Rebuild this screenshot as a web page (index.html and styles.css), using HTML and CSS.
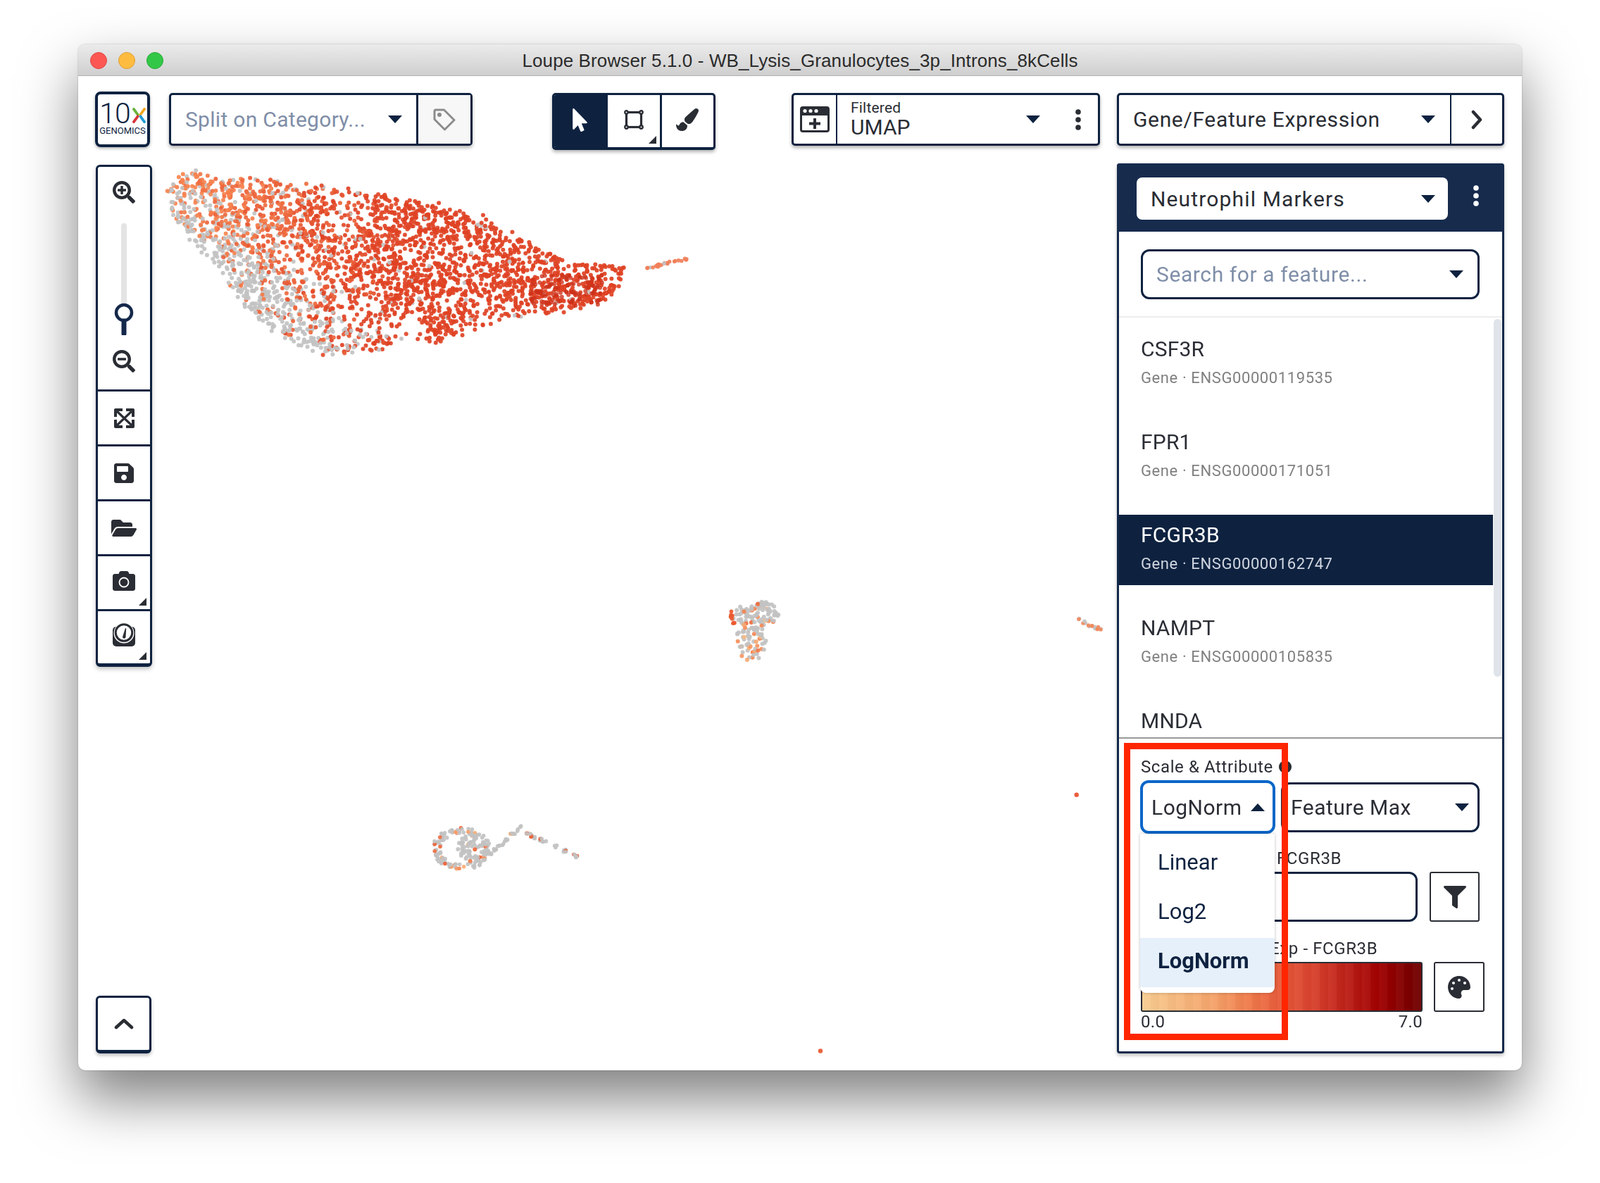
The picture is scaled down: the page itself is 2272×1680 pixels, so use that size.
FILE: index.html
```html
<!DOCTYPE html>
<html lang="en">

<head>
    <meta charset="UTF-8">
    <title>Loupe Browser 5.1.0</title>
    <link rel="stylesheet" href="styles.css">
    <script src="scatter.js" defer></script>
</head>

<body>
    <div class="window">
        <div class="titleBar">
            <div class="lights">
                <span class="light redLight"></span>
                <span class="light amberLight"></span>
                <span class="light greenLight"></span>
            </div>
            <span class="windowTitle">Loupe Browser 5.1.0 - WB_Lysis_Granulocytes_3p_Introns_8kCells</span>
        </div>

        <div class="topBar">
            <div class="logo">
                <div class="logoTop">
                    <span class="logoTen">10</span>
                    <svg class="logoX" viewBox="0 0 20 22">
                        <path d="M1 0l8 11" stroke="#6ab23c" stroke-width="4" />
                        <path d="M19 0l-8 11" stroke="#f2a81d" stroke-width="4" />
                        <path d="M9 11l-8 11" stroke="#d8343a" stroke-width="4" />
                        <path d="M11 11l8 11" stroke="#1f9ad6" stroke-width="4" />
                    </svg>
                </div>
                <span class="logoWord">GENOMICS</span>
            </div>

            <div class="box splitBox">
                <div class="splitMain">
                    <span class="placeholder">Split on Category...</span>
                    <span class="caret"></span>
                </div>
                <div class="tagCell">
                    <svg class="tagIcon" viewBox="0 0 32 32" fill="none" stroke="#8c8c8c" stroke-width="3">
                        <path d="M2 4a2 2 0 0 1 2-2h11.500L30 16.500 16.500 30 2 15.500z" stroke-linejoin="round" />
                        <circle cx="9" cy="9" r="3" fill="#8c8c8c" stroke="none" />
                    </svg>
                </div>
            </div>

            <div class="box tools">
                <div class="tool toolActive">
                    <svg class="pointerIcon" viewBox="0 0 320 512">
                        <path fill="#fff" d="M302.189 329.126H196.105l55.831 135.993c3.889 9.428-.555 19.999-9.444 23.999l-49.165 21.427c-9.165 4-19.443-.571-23.332-9.714l-53.053-129.136-86.664 89.138C18.729 472.71 0 463.554 0 447.977V18.299C0 1.899 19.921-6.096 30.277 5.443l284.412 292.542c11.472 11.179 3.007 31.141-12.5 31.141z" />
                    </svg>
                </div>
                <div class="tool">
                    <svg class="cropIcon" viewBox="0 0 28 28" fill="none" stroke="#2a2d34" stroke-width="3.200">
                        <rect x="3.500" y="3.500" width="21" height="21" />
                        <circle cx="3.500" cy="3.500" r="2.200" fill="#fff" stroke-width="2.400" />
                        <circle cx="24.500" cy="3.500" r="2.200" fill="#fff" stroke-width="2.400" />
                        <circle cx="3.500" cy="24.500" r="2.200" fill="#fff" stroke-width="2.400" />
                        <circle cx="24.500" cy="24.500" r="2.200" fill="#fff" stroke-width="2.400" />
                    </svg>
                    <span class="cornerMark"></span>
                </div>
                <div class="tool">
                    <svg class="brushIcon" viewBox="0 0 512 512">
                        <path fill="#2a2d34" d="M167.02 309.34c-40.12 2.58-76.53 17.86-97.19 72.3-2.35 6.21-8 9.98-14.59 9.98-11.11 0-45.46-27.67-55.25-34.35C0 439.62 37.93 512 128 512c75.86 0 128-43.77 128-120.19 0-3.11-.65-6.08-.97-9.13l-88.01-73.34zM457.89 0c-15.16 0-29.37 6.71-40.21 16.45C213.27 199.05 192 203.34 192 257.09c0 13.7 3.25 26.76 8.73 38.7l63.82 53.18c7.21 1.8 14.64 3.03 22.39 3.03 62.11 0 98.11-45.47 211.16-256.46 7.38-14.35 13.9-29.85 13.9-45.99C512 20.64 486 0 457.89 0z" />
                    </svg>
                </div>
            </div>

            <div class="box viewBox">
                <div class="viewIconCell">
                    <svg class="windowIcon" viewBox="0 0 42 37">
                        <path fill="#2a2d34" fill-rule="evenodd" d="M4 0h34a4 4 0 0 1 4 4v29a4 4 0 0 1-4 4H4a4 4 0 0 1-4-4V4a4 4 0 0 1 4-4zM3 13v20a1 1 0 0 0 1 1h34a1 1 0 0 0 1-1V13z" />
                        <circle cx="7" cy="6.500" r="2.600" fill="#fff" />
                        <circle cx="15" cy="6.500" r="2.600" fill="#fff" />
                        <circle cx="23" cy="6.500" r="2.600" fill="#fff" />
                        <path fill="#2a2d34" d="M19 17h4v5.500h6v4h-6V32h-4v-5.500h-6v-4h6z" />
                    </svg>
                </div>
                <div class="viewText">
                    <span class="viewSmall">Filtered</span>
                    <span class="viewName">UMAP</span>
                </div>
                <span class="caret"></span>
                <svg class="dotsIcon" viewBox="0 0 8 30">
                    <circle cx="4" cy="4" r="3.800" fill="#2a2d34" />
                    <circle cx="4" cy="15" r="3.800" fill="#2a2d34" />
                    <circle cx="4" cy="26" r="3.800" fill="#2a2d34" />
                </svg>
            </div>

            <div class="box geneBox">
                <div class="geneMain">
                    <span class="bodyText geneText">Gene/Feature Expression</span>
                    <span class="caret"></span>
                </div>
                <div class="chevronCell">
                    <svg class="chevronRight" viewBox="0 0 16 28" fill="none" stroke="#2a2d34" stroke-width="4.500" stroke-linecap="round" stroke-linejoin="round">
                        <path d="M3 3l10 11L3 25" />
                    </svg>
                </div>
            </div>
        </div>

        <div class="mainRow">
            <div class="leftColumn">
                <div class="sideBar">
                    <div class="zoomCell">
                        <svg class="zoomIcon" viewBox="0 0 512 512">
                            <path fill="#2a2d34" d="M304 192v32c0 6.600-5.400 12-12 12h-56v56c0 6.600-5.400 12-12 12h-32c-6.600 0-12-5.400-12-12v-56h-56c-6.600 0-12-5.400-12-12v-32c0-6.600 5.400-12 12-12h56v-56c0-6.600 5.400-12 12-12h32c6.600 0 12 5.400 12 12v56h56c6.600 0 12 5.400 12 12zm201 284.700L476.700 505c-9.400 9.400-24.600 9.400-33.900 0L343 405.300c-4.500-4.500-7-10.600-7-17V372c-35.300 27.600-79.700 44-128 44C93.100 416 0 322.900 0 208S93.100 0 208 0s208 93.100 208 208c0 48.300-16.400 92.700-44 128h16.300c6.400 0 12.500 2.500 17 7l99.700 99.700c9.300 9.400 9.300 24.600 0 34zM344 208c0-75.200-60.800-136-136-136S72 132.800 72 208s60.800 136 136 136 136-60.800 136-136z" />
                        </svg>
                        <div class="zoomTrack"></div>
                        <svg class="zoomKnob" viewBox="0 0 28 46">
                            <circle cx="14" cy="14" r="11" fill="#fff" stroke="#14284a" stroke-width="4.500" />
                            <path d="M14 26v18" stroke="#14284a" stroke-width="7" stroke-linecap="round" />
                        </svg>
                        <svg class="zoomIcon zoomOut" viewBox="0 0 512 512">
                            <path fill="#2a2d34" d="M304 192v32c0 6.600-5.400 12-12 12H124c-6.600 0-12-5.400-12-12v-32c0-6.600 5.400-12 12-12h168c6.600 0 12 5.400 12 12zm201 284.700L476.700 505c-9.400 9.400-24.600 9.400-33.900 0L343 405.300c-4.500-4.500-7-10.600-7-17V372c-35.300 27.600-79.700 44-128 44C93.100 416 0 322.900 0 208S93.100 0 208 0s208 93.100 208 208c0 48.300-16.400 92.700-44 128h16.300c6.400 0 12.500 2.500 17 7l99.700 99.700c9.300 9.400 9.300 24.600 0 34zM344 208c0-75.200-60.800-136-136-136S72 132.800 72 208s60.800 136 136 136 136-60.800 136-136z" />
                        </svg>
                    </div>
                    <div class="sideCell">
                        <svg class="expandIcon" viewBox="0 0 29 28" fill="none" stroke="#2a2d34">
                            <path d="M4 4l21 20M25 4L4 24" stroke-width="3.200" />
                            <path d="M2 12V2h10M17 2h10v10M27 16v10H17M12 26H2V16" stroke-width="4" stroke-linejoin="round" />
                        </svg>
                    </div>
                    <div class="sideCell">
                        <svg class="sideIcon" viewBox="0 0 448 512">
                            <path fill="#2a2d34" d="M433.941 129.941l-83.882-83.882A48 48 0 0 0 316.118 32H48C21.490 32 0 53.490 0 80v352c0 26.510 21.490 48 48 48h352c26.510 0 48-21.490 48-48V163.882a48 48 0 0 0-14.059-33.941zM224 416c-35.346 0-64-28.654-64-64 0-35.346 28.654-64 64-64s64 28.654 64 64c0 35.346-28.654 64-64 64zm96-304.520V212c0 6.627-5.373 12-12 12H76c-6.627 0-12-5.373-12-12V108c0-6.627 5.373-12 12-12h228.520c3.183 0 6.235 1.264 8.485 3.515l3.480 3.480A11.996 11.996 0 0 1 320 111.480z" />
                        </svg>
                    </div>
                    <div class="sideCell">
                        <svg class="sideIcon wideIcon" viewBox="0 0 576 512">
                            <path fill="#2a2d34" d="M572.694 292.093L500.270 416.248A63.997 63.997 0 0 1 444.989 448H45.025c-18.523 0-30.064-20.093-20.731-36.093l72.424-124.155A64 64 0 0 1 152 256h399.964c18.523 0 30.064 20.093 20.730 36.093zM152 224h328v-48c0-26.510-21.490-48-48-48H272l-64-64H48C21.490 64 0 85.490 0 112v278.046l69.077-118.418C86.214 242.250 117.989 224 152 224z" />
                        </svg>
                    </div>
                    <div class="sideCell">
                        <svg class="sideIcon cameraIcon" viewBox="0 0 512 512">
                            <path fill="#2a2d34" d="M512 144v288c0 26.500-21.500 48-48 48H48c-26.500 0-48-21.500-48-48V144c0-26.500 21.500-48 48-48h88l12.300-32.900c7-18.700 24.900-31.100 44.900-31.100h125.500c20 0 37.900 12.400 44.900 31.100L376 96h88c26.500 0 48 21.500 48 48z" />
                            <circle cx="256" cy="288" r="104" fill="#2a2d34" stroke="#fff" stroke-width="30" />
                        </svg>
                        <span class="cornerMark"></span>
                    </div>
                    <div class="sideCell lastCell">
                        <svg class="gaugeIcon" viewBox="0 0 32 33">
                            <rect x="0" y="5" width="32" height="28" rx="5" fill="#2a2d34" />
                            <circle cx="16" cy="14" r="14.500" fill="#fff" />
                            <circle cx="16" cy="13.500" r="11.800" fill="#fff" stroke="#2a2d34" stroke-width="3" />
                            <path d="M14 19.500L18 7l1.200.4-.7 12.600a2.300 2.300 0 0 1-4.500-.5z" fill="#2a2d34" />
                        </svg>
                        <span class="cornerMark"></span>
                    </div>
                </div>

                <div class="upButton">
                    <svg class="chevronUp" viewBox="0 0 28 16" fill="none" stroke="#2a2d34" stroke-width="4.500" stroke-linecap="round" stroke-linejoin="round">
                        <path d="M3 13L14 3l11 10" />
                    </svg>
                </div>
            </div>

            <div class="plot">
                <canvas id="scatter" width="1370" height="1264"></canvas>
            </div>

            <div class="panel">
                <div class="panelHead">
                    <div class="listSelect">
                        <span class="bodyText listText">Neutrophil Markers</span>
                        <span class="caret"></span>
                    </div>
                    <svg class="dotsIcon" viewBox="0 0 8 30">
                        <circle cx="4" cy="4" r="3.800" fill="#fff" />
                        <circle cx="4" cy="15" r="3.800" fill="#fff" />
                        <circle cx="4" cy="26" r="3.800" fill="#fff" />
                    </svg>
                </div>

                <div class="searchWrap">
                    <div class="searchBox">
                        <span class="placeholder searchText">Search for a feature...</span>
                        <span class="caret"></span>
                    </div>
                </div>

                <div class="featureList">
                    <div class="rows">
                        <div class="featureRow">
                            <span class="featureName">CSF3R</span>
                            <span class="featureId">Gene · ENSG00000119535</span>
                        </div>
                        <div class="featureRow">
                            <span class="featureName">FPR1</span>
                            <span class="featureId">Gene · ENSG00000171051</span>
                        </div>
                        <div class="featureRow selectedRow">
                            <span class="featureName">FCGR3B</span>
                            <span class="featureId">Gene · ENSG00000162747</span>
                        </div>
                        <div class="featureRow">
                            <span class="featureName">NAMPT</span>
                            <span class="featureId">Gene · ENSG00000105835</span>
                        </div>
                        <div class="featureRow">
                            <span class="featureName">MNDA</span>
                        </div>
                    </div>
                    <div class="scrollBar">
                        <div class="scrollThumb"></div>
                    </div>
                </div>

                <div class="scalePanel">
                    <div class="smallLabel scaleLabel">
                        <span>Scale &amp; Attribute</span>
                        <span class="infoDot"></span>
                    </div>
                    <div class="scaleRow">
                        <div class="scaleSelect openSelect">
                            <span class="bodyText">LogNorm</span>
                            <span class="caret caretUp"></span>
                        </div>
                        <div class="scaleSelect attrSelect">
                            <span class="bodyText">Feature Max</span>
                            <span class="caret"></span>
                        </div>
                    </div>

                    <div class="smallLabel filterLabel">FCGR3B</div>
                    <div class="filterRow">
                        <div class="filterInput"></div>
                        <div class="squareButton">
                            <svg class="filterIcon" viewBox="0 0 512 512">
                                <path fill="#2a2d34" d="M487.976 0H24.028C2.710 0-8.047 25.866 7.058 40.971L192 225.941V432c0 7.831 3.821 15.170 10.237 19.662l80 55.980C298.020 518.690 320 507.493 320 487.980V225.941l184.947-184.970C520.021 25.896 509.338 0 487.976 0z" />
                            </svg>
                        </div>
                    </div>

                    <div class="smallLabel rampLabel">Exp - FCGR3B</div>
                    <div class="rampRow">
                        <div class="ramp"></div>
                        <div class="squareButton">
                            <svg class="paletteIcon" viewBox="0 0 512 512">
                                <path fill="#2a2d34" d="M204.300 5C104.900 24.400 24.800 104.300 5.200 203.400c-37 187 131.700 326.400 258.800 306.700 41.200-6.400 61.400-54.600 42.500-91.700-23.100-45.400 9.900-98.400 60.900-98.400h79.700c35.800 0 64.800-29.600 64.900-65.300C511.500 97.100 368.100-26.900 204.300 5zM96 320c-17.700 0-32-14.300-32-32s14.300-32 32-32 32 14.300 32 32-14.300 32-32 32zm32-128c-17.700 0-32-14.300-32-32s14.300-32 32-32 32 14.300 32 32-14.300 32-32 32zm128-64c-17.700 0-32-14.300-32-32s14.300-32 32-32 32 14.300 32 32-14.300 32-32 32zm128 64c-17.700 0-32-14.300-32-32s14.300-32 32-32 32 14.300 32 32-14.300 32-32 32z" />
                            </svg>
                        </div>
                    </div>
                    <div class="rampTicks">
                        <span>0.0</span>
                        <span>7.0</span>
                    </div>

                    <div class="scaleMenu">
                        <div class="menuItem">Linear</div>
                        <div class="menuItem">Log2</div>
                        <div class="menuItem menuActive">LogNorm</div>
                    </div>
                    <div class="redMark"></div>
                </div>
            </div>
        </div>
    </div>
</body>

</html>
```

FILE: styles.css
```css
html {
    margin: 0;
    height: 100%;
}

body {
    margin: 0;
    height: 1680px;
    overflow: hidden;
    background-color: #ffffff;
    font-family: "Roboto", "Liberation Sans", sans-serif;
    color: #2a2d34;
}

.window {
    width: 2050px;
    height: 1457px;
    margin: 63px 0 0 111px;
    background-color: #ffffff;
    border-radius: 10px;
    box-shadow: rgba(0, 0, 0, 0.5) 0px 40px 80px, rgba(0, 0, 0, 0.3) 0px 0px 2px;
    display: flex;
    flex-direction: column;
    overflow: hidden;
}

.titleBar {
    height: 45px;
    flex: none;
    display: flex;
    align-items: center;
    justify-content: center;
    position: relative;
    padding-top: 2px;
    background-image: linear-gradient(#ebebeb, #cfcfcf);
    border-bottom: solid 1px #b1b1b1;
    box-sizing: border-box;
}

.lights {
    position: absolute;
    left: 17px;
    top: 11px;
    display: flex;
    gap: 16px;
}

.light {
    width: 24px;
    height: 24px;
    border-radius: 50%;
    box-sizing: border-box;
}

.redLight {
    background-color: #fc5753;
    border: solid 1px #df4744;
}

.amberLight {
    background-color: #fdbc40;
    border: solid 1px #de9f34;
}

.greenLight {
    background-color: #33c748;
    border: solid 1px #27aa35;
}

.windowTitle {
    font-family: "Liberation Sans", sans-serif;
    font-size: 26px;
    letter-spacing: 0.11px;
    color: #2b2b2b;
}

.topBar {
    flex: none;
    height: 124px;
    box-sizing: border-box;
    padding: 22px 0 0 24px;
    display: flex;
    align-items: flex-start;
}

.box {
    box-sizing: border-box;
    border: solid 3px #0e2240;
    border-radius: 5px;
    background-color: #ffffff;
    box-shadow: rgba(0, 0, 0, 0.3) 0px 3px 5px;
    display: flex;
}

.logo {
    width: 78px;
    height: 79px;
    box-sizing: border-box;
    border: solid 4px #0e2240;
    border-radius: 8px;
    box-shadow: rgba(0, 0, 0, 0.3) 0px 2px 4px;
    display: flex;
    flex-direction: column;
    align-items: center;
    padding-top: 11px;
}

.logoTop {
    display: flex;
    align-items: flex-end;
    gap: 3px;
    height: 32px;
}

.logoTen {
    font-size: 41px;
    font-weight: 300;
    line-height: 32px;
    color: #0e2240;
    letter-spacing: -1px;
}

.logoX {
    width: 19px;
    height: 22px;
    margin-bottom: 2px;
}

.logoWord {
    font-size: 13px;
    line-height: 15px;
    margin-top: 1px;
    color: #0e2240;
}

.splitBox {
    width: 431px;
    height: 75px;
    margin: 2px 0 0 27px;
}

.splitMain {
    flex: 1;
    display: flex;
    align-items: center;
    justify-content: space-between;
    padding: 0 20px 0 20px;
    border-right: solid 3px #0e2240;
}

.tagCell {
    width: 74px;
    background-color: #f7f7f7;
    display: flex;
    align-items: center;
    justify-content: center;
}

.tagIcon {
    width: 32px;
    height: 32px;
}

.placeholder {
    font-size: 30px;
    color: #7f8ea8;
    letter-spacing: 0.3px;
}

.searchText {
    letter-spacing: 0.6px;
}

.bodyText {
    font-size: 30px;
    color: #2a2d34;
    letter-spacing: 0.5px;
}

.geneText {
    letter-spacing: 0.65px;
}

.listText {
    letter-spacing: 1.15px;
}

.caret {
    flex: none;
    width: 0;
    height: 0;
    border-left: solid 10px transparent;
    border-right: solid 10px transparent;
    border-top: solid 11px #0e2240;
}

.caretUp {
    border-top: none;
    border-bottom: solid 11px #0e2240;
}

.tools {
    width: 232px;
    height: 81px;
    margin: 2px 0 0 113px;
    overflow: hidden;
    border-bottom-width: 4px;
}

.tool {
    flex: 1;
    display: flex;
    align-items: center;
    justify-content: center;
    position: relative;
    padding-bottom: 4px;
    border-left: solid 3px #0e2240;
}

.tool:first-child {
    border-left: none;
}

.toolActive {
    background-color: #0e2240;
}

.pointerIcon {
    width: 21px;
    height: 33px;
}

.cropIcon {
    width: 28px;
    height: 28px;
}

.brushIcon {
    width: 32px;
    height: 32px;
}

.cornerMark {
    position: absolute;
    right: 5px;
    bottom: 5px;
    width: 0;
    height: 0;
    border-left: solid 11px transparent;
    border-bottom: solid 11px #2a2d34;
}

.viewBox {
    width: 438px;
    height: 75px;
    margin: 2px 0 0 108px;
    align-items: center;
}

.viewIconCell {
    width: 60px;
    height: 100%;
    border-right: solid 2px #0e2240;
    display: flex;
    align-items: center;
    justify-content: center;
    flex: none;
}

.windowIcon {
    width: 42px;
    height: 37px;
}

.viewText {
    flex: 1;
    display: flex;
    flex-direction: column;
    padding-left: 19px;
}

.viewSmall {
    font-size: 21px;
    line-height: 22px;
    letter-spacing: 0.2px;
    margin-top: -1px;
}

.viewName {
    font-size: 30px;
    line-height: 33px;
}

.viewBox .caret {
    margin-right: 50px;
}

.dotsIcon {
    width: 8px;
    height: 30px;
    flex: none;
}

.viewBox .dotsIcon {
    margin-right: 24px;
}

.geneBox {
    width: 550px;
    height: 75px;
    margin: 2px 0 0 24px;
}

.geneMain {
    flex: 1;
    display: flex;
    align-items: center;
    justify-content: space-between;
    padding: 0 21px 0 20px;
    border-right: solid 2px #0e2240;
}

.chevronCell {
    width: 72px;
    display: flex;
    align-items: center;
    justify-content: center;
}

.chevronRight {
    width: 16px;
    height: 28px;
}

.mainRow {
    flex: 1;
    min-height: 0;
    display: flex;
    padding-left: 25px;
    align-items: flex-start;
}

.leftColumn {
    width: 80px;
    height: 1262px;
    flex: none;
    margin-top: 2px;
    display: flex;
    flex-direction: column;
    justify-content: space-between;
    position: relative;
    z-index: 1;
}

.sideBar {
    width: 80px;
    box-sizing: border-box;
    border: solid 3px #0e2240;
    border-bottom-width: 5px;
    border-radius: 6px;
    background-color: #ffffff;
    box-shadow: rgba(0, 0, 0, 0.25) 0px 3px 6px;
}

.zoomCell {
    height: 316px;
    display: flex;
    flex-direction: column;
    align-items: center;
    position: relative;
}

.zoomIcon {
    width: 32px;
    height: 32px;
    margin-top: 20px;
}

.zoomOut {
    position: absolute;
    top: 260px;
    left: 21px;
    margin: 0;
}

.zoomTrack {
    width: 8px;
    height: 130px;
    margin-top: 28px;
    border-radius: 4px;
    background-color: #e4e4e4;
}

.zoomKnob {
    position: absolute;
    left: 23px;
    top: 193px;
    width: 28px;
    height: 46px;
}

.sideCell {
    height: 78px;
    box-sizing: border-box;
    border-top: solid 3px #0e2240;
    display: flex;
    align-items: center;
    justify-content: center;
    position: relative;
}

.lastCell {
    height: 77px;
}

.sideIcon {
    width: 28px;
    height: 32px;
}

.expandIcon {
    width: 29px;
    height: 28px;
}

.wideIcon {
    width: 36px;
}

.cameraIcon {
    width: 32px;
    height: 34px;
    margin-bottom: 6px;
}

.gaugeIcon {
    width: 32px;
    height: 33px;
    margin-bottom: 8px;
}

.upButton {
    width: 79px;
    height: 82px;
    box-sizing: border-box;
    border: solid 3px #0e2240;
    border-bottom-width: 5px;
    border-radius: 6px;
    box-shadow: rgba(0, 0, 0, 0.25) 0px 3px 5px;
    display: flex;
    align-items: center;
    justify-content: center;
    background-color: #ffffff;
}

.chevronUp {
    width: 28px;
    height: 16px;
}

.plot {
    width: 1370px;
    flex: none;
    height: 1264px;
}

#scatter {
    display: block;
}

.panel {
    width: 550px;
    height: 1264px;
    flex: none;
    box-sizing: border-box;
    border: solid 3px #14284a;
    border-top: none;
    border-radius: 4px;
    box-shadow: rgba(0, 0, 0, 0.25) 0px 3px 5px;
    display: flex;
    flex-direction: column;
    background-color: #ffffff;
}

.panelHead {
    height: 97px;
    flex: none;
    box-sizing: border-box;
    margin: 0 -3px;
    padding: 20px 36px 0 28px;
    background-color: #172b4d;
    border-radius: 4px 4px 0 0;
    display: flex;
    align-items: flex-start;
    justify-content: space-between;
}

.listSelect {
    width: 442px;
    height: 60px;
    box-sizing: border-box;
    padding: 0 18px 0 20px;
    border-radius: 8px;
    background-color: #ffffff;
    display: flex;
    align-items: center;
    justify-content: space-between;
}

.panelHead .dotsIcon {
    margin-top: 11px;
}

.searchWrap {
    height: 122px;
    flex: none;
    box-sizing: border-box;
    padding: 25px 32px 0 31px;
    border-bottom: solid 2px #eeeeee;
}

.searchBox {
    height: 71px;
    box-sizing: border-box;
    border: solid 3px #0e2240;
    border-radius: 12px;
    padding: 0 20px 0 19px;
    display: flex;
    align-items: center;
    justify-content: space-between;
}

.featureList {
    flex: 1;
    min-height: 0;
    display: flex;
    overflow: hidden;
}

.rows {
    flex: 1;
    padding-top: 16px;
    display: flex;
    flex-direction: column;
    gap: 32px;
}

.featureRow {
    height: 100px;
    flex: none;
    box-sizing: border-box;
    padding: 12px 0 0 31px;
    display: flex;
    flex-direction: column;
}

.featureName {
    font-size: 30px;
    line-height: 34px;
    letter-spacing: 0.2px;
}

.featureId {
    font-size: 22px;
    line-height: 26px;
    margin-top: 11px;
    color: #808080;
    letter-spacing: 0.6px;
}

.selectedRow {
    background-color: #0e2240;
}

.selectedRow .featureName {
    color: #ffffff;
}

.selectedRow .featureId {
    color: #d0d6e0;
}

.scrollBar {
    width: 13px;
    flex: none;
}

.scrollThumb {
    width: 11px;
    height: 508px;
    border-radius: 6px;
    margin: 2px 0 0 1px;
    background-color: #dfe3ea;
}

.scalePanel {
    height: 446px;
    flex: none;
    box-sizing: border-box;
    border-top: solid 2px #999999;
    padding-left: 31px;
    position: relative;
}

.smallLabel {
    font-size: 24px;
    line-height: 28px;
    letter-spacing: 0.6px;
    color: #2a2d34;
}

.scaleLabel {
    margin-top: 26px;
    display: flex;
    align-items: center;
    gap: 8px;
}

.infoDot {
    width: 18px;
    height: 18px;
    border-radius: 50%;
    background-color: #2a2d34;
}

.scaleRow {
    margin-top: 5px;
    height: 76px;
    display: flex;
    align-items: center;
    gap: 8px;
    margin-left: -1px;
}

.scaleSelect {
    box-sizing: border-box;
    height: 71px;
    border: solid 3px #0e2240;
    border-radius: 12px;
    display: flex;
    align-items: center;
    justify-content: space-between;
}

.openSelect {
    width: 192px;
    height: 76px;
    border: solid 4px #0a66c8;
    padding: 0 11px 0 12px;
}

.attrSelect {
    width: 282px;
    padding: 0 12px 0 11px;
}

.filterLabel {
    margin-top: 21px;
    padding-left: 193px;
}

.filterRow,
.rampRow {
    display: flex;
    align-items: flex-start;
}

.filterRow {
    margin-top: 5px;
}

.filterInput {
    width: 393px;
    height: 71px;
    box-sizing: border-box;
    border: solid 3px #0e2240;
    border-radius: 12px;
}

.squareButton {
    width: 71px;
    height: 71px;
    box-sizing: border-box;
    border: solid 2px #2a2d34;
    border-radius: 3px;
    display: flex;
    align-items: center;
    justify-content: center;
    background-color: #ffffff;
}

.filterRow .squareButton {
    margin-left: 17px;
}

.filterIcon {
    width: 32px;
    height: 32px;
}

.rampLabel {
    margin-top: 24px;
    padding-left: 183px;
}

.rampRow {
    margin-top: 5px;
}

.ramp {
    width: 400px;
    height: 71px;
    box-sizing: border-box;
    border: solid 2px #2a2d34;
    border-radius: 3px;
    background-image: repeating-linear-gradient(to right, rgba(255, 255, 255, 0.035) 0 12px, rgba(0, 0, 0, 0.02) 12px 24px), linear-gradient(to right, #f8cd92 0%, #f5a56c 25%, #f07c4c 38%, #e75a3a 50%, #d6402c 62%, #b61812 76%, #a00000 85%, #6e0000 100%);
}

.rampRow .squareButton {
    margin-left: 16px;
    width: 72px;
}

.paletteIcon {
    width: 32px;
    height: 32px;
}

.rampTicks {
    width: 400px;
    display: flex;
    justify-content: space-between;
    font-size: 24px;
    line-height: 28px;
    letter-spacing: 0.3px;
}

.scaleMenu {
    position: absolute;
    left: 30px;
    top: 135px;
    width: 191px;
    height: 226px;
    background-color: #ffffff;
    border-radius: 0 0 8px 8px;
    box-shadow: rgba(0, 0, 0, 0.25) 0px 0px 4px;
    padding-top: 8px;
    box-sizing: border-box;
    z-index: 2;
}

.menuItem {
    height: 70px;
    box-sizing: border-box;
    padding: 0 0 6px 25px;
    display: flex;
    align-items: center;
    font-size: 31px;
    color: #0e2240;
}

.menuActive {
    background-color: #e6f0fa;
    font-weight: 700;
}

.redMark {
    position: absolute;
    left: 7px;
    top: 6px;
    width: 233px;
    height: 422px;
    box-sizing: border-box;
    border: solid 9px #ff2600;
    z-index: 3;
}
```

FILE: scatter.js
```js
// draws the UMAP dots, coordinates below are page px / 1.449
const canvas = document.getElementById("scatter");
const ctx = canvas.getContext("2d");
const SCALE = 1.449;
const ORIGIN_X = 216;
const ORIGIN_Y = 232;
const GREY = "#c2c2c2";

let seed = 20210;
function rand() {
    seed = (seed + 0x6d2b79f5) | 0;
    let t = Math.imul(seed ^ (seed >>> 15), 1 | seed);
    t = (t + Math.imul(t ^ (t >>> 7), 61 | t)) ^ t;
    return ((t ^ (t >>> 14)) >>> 0) / 4294967296;
}

const blob = [
    [165, 190], [170, 172], [190, 167], [215, 175], [265, 178], [320, 183], [370, 190],
    [420, 200], [470, 212], [520, 240], [560, 258], [610, 258], [612, 270], [600, 290],
    [570, 303], [520, 308], [470, 320], [430, 335], [390, 335], [350, 345], [320, 348],
    [290, 335], [262, 318], [235, 295], [215, 262], [190, 240], [168, 212]
];

// x, y, radius, how much is removed at the centre
const holes = [
    [335, 215, 28, 1], [301, 267, 24, 0.85], [354, 306, 38, 0.8], [400, 325, 34, 0.85],
    [480, 303, 28, 0.6], [232, 190, 10, 0.6], [520, 250, 26, 0.4]
];

function inside(x, y, poly) {
    let hit = false;
    for (let i = 0, j = poly.length - 1; i < poly.length; j = i++) {
        const [xi, yi] = poly[i];
        const [xj, yj] = poly[j];
        if ((yi > y) !== (yj > y) && x < ((xj - xi) * (y - yi)) / (yj - yi) + xi) {
            hit = !hit;
        }
    }
    return hit;
}

function mix(a, b, t) {
    const r = Math.round(a[0] + (b[0] - a[0]) * t);
    const g = Math.round(a[1] + (b[1] - a[1]) * t);
    const bl = Math.round(a[2] + (b[2] - a[2]) * t);
    return `rgb(${r},${g},${bl})`;
}

function dot(x, y, color, radius) {
    ctx.fillStyle = color;
    ctx.beginPath();
    ctx.arc(x * SCALE - ORIGIN_X, y * SCALE - ORIGIN_Y, radius, 0, Math.PI * 2);
    ctx.fill();
}

function blobColor(x, y) {
    const d = ((x - 165) * 150 - (y - 200) * 175) / 230;
    const greyChance = Math.min(0.85, 0.72 * Math.exp(-d / 24) + (x < 300 ? 0.08 : 0.02));
    if (rand() < greyChance) return GREY;
    const t = Math.min(1, Math.max(0, (x - 190) / 170 + (rand() - 0.5) * 0.7));
    return mix([247, 132, 80], [224, 66, 36], t);
}

function drawBlob() {
    let placed = 0;
    while (placed < 3000) {
        const x = 160 + rand() * 455;
        const y = 165 + rand() * 185;
        if (!inside(x, y, blob)) continue;
        let keep = 1;
        for (const [hx, hy, hr, amount] of holes) {
            const dist = Math.hypot(x - hx, y - hy);
            if (dist < hr) keep *= 1 - amount * (1 - dist / hr);
        }
        if (rand() > keep) continue;
        const jitterX = (rand() - 0.5) * 7;
        const jitterY = (rand() - 0.5) * 7;
        dot(x + jitterX, y + jitterY, blobColor(x, y), 3);
        placed++;
    }
    // darker clump at the right end
    for (let i = 0; i < 110; i++) {
        dot(555 + (rand() - 0.5) * 70, 285 + (rand() - 0.5) * 30, "rgba(205,48,24,0.85)", 3);
    }
}

function drawPatch(cx, cy, rx, ry, count, warm) {
    for (let i = 0; i < count; i++) {
        const angle = rand() * Math.PI * 2;
        const r = Math.sqrt(rand());
        const x = cx + Math.cos(angle) * r * rx;
        const y = cy + Math.sin(angle) * r * ry;
        const color = rand() < warm ? mix([250, 190, 130], [238, 100, 55], rand()) : GREY;
        dot(x, y, color, 3);
    }
}

function drawStreak(x1, y1, x2, y2, count, warm, color) {
    for (let i = 0; i < count; i++) {
        const t = rand();
        const x = x1 + (x2 - x1) * t + (rand() - 0.5) * 3;
        const y = y1 + (y2 - y1) * t + (rand() - 0.5) * 3;
        dot(x, y, rand() < warm ? color : GREY, 2.8);
    }
}

ctx.filter = "blur(0.7px)";
ctx.globalAlpha = 0.92;

// top blob and the tail right of it
drawBlob();
drawStreak(634, 262, 673, 254, 24, 0.9, "#f0805a");

// middle cluster
drawPatch(742, 602, 21, 13, 85, 0.25);
drawPatch(736, 628, 15, 20, 65, 0.3);
drawStreak(716, 600, 720, 612, 10, 0.9, "#ea5a30");

// lower cluster, ring with a tail
for (let i = 0; i < 130; i++) {
    const angle = rand() * Math.PI * 2;
    const r = 0.75 + rand() * 0.3;
    const color = rand() < 0.18 ? mix([250, 190, 130], [238, 90, 50], rand()) : GREY;
    dot(452 + Math.cos(angle) * 27 * r, 832 + Math.sin(angle) * 20 * r, color, 2.8);
}
drawPatch(462, 832, 14, 14, 50, 0.05);
drawStreak(480, 838, 510, 810, 28, 0.2, "#f5a060");
drawStreak(512, 815, 567, 840, 36, 0.25, "#ec6035");

// right edge strays
drawStreak(1057, 607, 1080, 618, 16, 0.5, "#f08a60");
dot(1055, 779, "#e9502c", 3.2);
dot(804, 1030, "#e9582f", 3.2);
```
